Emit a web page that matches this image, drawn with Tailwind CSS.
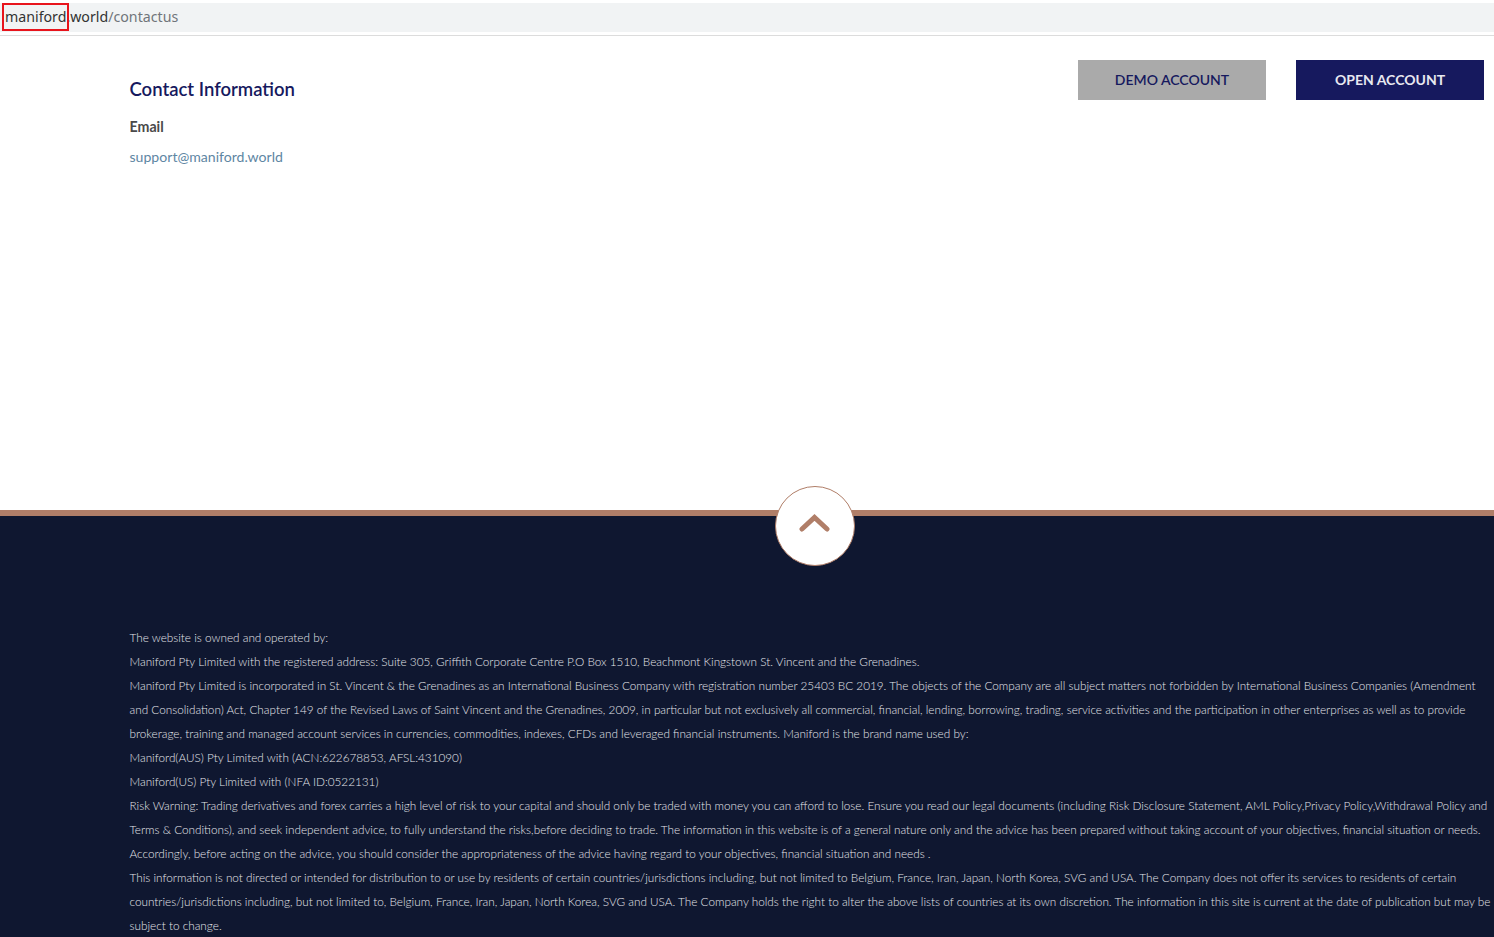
<!DOCTYPE html>
<html lang="en">
<head>
    <meta charset="UTF-8" />
    <meta name="viewport" content="width=device-width, initial-scale=1.0"/>
    <title>Contact Us</title>
    <script src="https://cdn.jsdelivr.net/npm/@tailwindcss/browser@4"></script>
</head>
<body class="bg-white h-[937px] overflow-hidden font-['Lato',sans-serif]">
    <!-- Address bar -->
    <div class="h-[36px] pt-[3px] border-b border-[#dcdcdc]">
        <div class="relative h-[29px] bg-[#f1f3f4] pl-[5px] text-[14.200px] leading-[27px] text-[#70757a] font-['Noto_Sans','Open_Sans',sans-serif]">
            <span class="text-[#333]">maniford.world</span>/contactus
            <div class="absolute left-[2px] top-0 w-[67px] h-[28px] border-2 border-[#e8141c]"></div>
        </div>
    </div>

    <!-- Content -->
    <div class="h-[474px] flex justify-between pl-[129.500px] pr-[10px] pt-[24px]">
        <div>
            <h1 class="mt-[17px] text-[18.500px] leading-[25px] font-semibold text-[#16195e]">Contact Information</h1>
            <p class="mt-[15px] text-[14.200px] leading-[20px] font-bold text-[#4a4a4a]">Email</p>
            <a href="#" class="block mt-[10px] text-[14.100px] leading-[20px] text-[#5e86a3]">support@maniford.world</a>
        </div>
        <div class="flex gap-[30px]">
            <a href="#" class="w-[188px] h-[40px] pb-[2px] flex items-center justify-center bg-[#aaaaaa] text-[#16195e] text-[14px] font-semibold">DEMO ACCOUNT</a>
            <a href="#" class="w-[188px] h-[40px] pb-[2px] flex items-center justify-center bg-[#16195e] text-[#e8e8f0] text-[14px] font-bold">OPEN ACCOUNT</a>
        </div>
    </div>

    <!-- Footer -->
    <footer class="relative h-[427px] bg-[#0f1730] border-t-[6px] border-[#b07e68] pl-[129.500px] pt-[110px] text-[11.750px] font-light leading-[24px] text-[#e4e5ea] whitespace-nowrap">
        <a href="#" class="absolute left-[775px] top-[-30px] w-[80px] h-[80px] rounded-full bg-white border border-[#b07e68] flex items-center justify-center">
            <svg width="32" height="22" viewBox="0 0 32 22" class="mt-[-5px]" fill="none" stroke="#b07e68" stroke-width="5" stroke-linecap="round" stroke-linejoin="miter">
                <path d="M3 16 L15.500 4.500 L28 16"/>
            </svg>
        </a>
        <p>The website is owned and operated by:</p>
        <p>Maniford Pty Limited with the registered address: Suite 305, Griffith Corporate Centre P.O Box 1510, Beachmont Kingstown St. Vincent and the Grenadines.</p>
        <p>Maniford Pty Limited is incorporated in St. Vincent &amp; the Grenadines as an International Business Company with registration number 25403 BC 2019. The objects of the Company are all subject matters not forbidden by International Business Companies (Amendment<br>and Consolidation) Act, Chapter 149 of the Revised Laws of Saint Vincent and the Grenadines, 2009, in particular but not exclusively all commercial, financial, lending, borrowing, trading, service activities and the participation in other enterprises as well as to provide<br>brokerage, training and managed account services in currencies, commodities, indexes, CFDs and leveraged financial instruments. Maniford is the brand name used by:</p>
        <p>Maniford(AUS) Pty Limited with (ACN:622678853, AFSL:431090)</p>
        <p>Maniford(US) Pty Limited with (NFA ID:0522131)</p>
        <p>Risk Warning: Trading derivatives and forex carries a high level of risk to your capital and should only be traded with money you can afford to lose. Ensure you read our legal documents (including Risk Disclosure Statement, AML Policy,Privacy Policy,Withdrawal Policy and<br>Terms &amp; Conditions), and seek independent advice, to fully understand the risks,before deciding to trade. The information in this website is of a general nature only and the advice has been prepared without taking account of your objectives, financial situation or needs.<br>Accordingly, before acting on the advice, you should consider the appropriateness of the advice having regard to your objectives, financial situation and needs .</p>
        <p>This information is not directed or intended for distribution to or use by residents of certain countries/jurisdictions including, but not limited to Belgium, France, Iran, Japan, North Korea, SVG and USA. The Company does not offer its services to residents of certain<br>countries/jurisdictions including, but not limited to, Belgium, France, Iran, Japan, North Korea, SVG and USA. The Company holds the right to alter the above lists of countries at its own discretion. The information in this site is current at the date of publication but may be<br>subject to change.</p>
    </footer>
</body>
</html>
